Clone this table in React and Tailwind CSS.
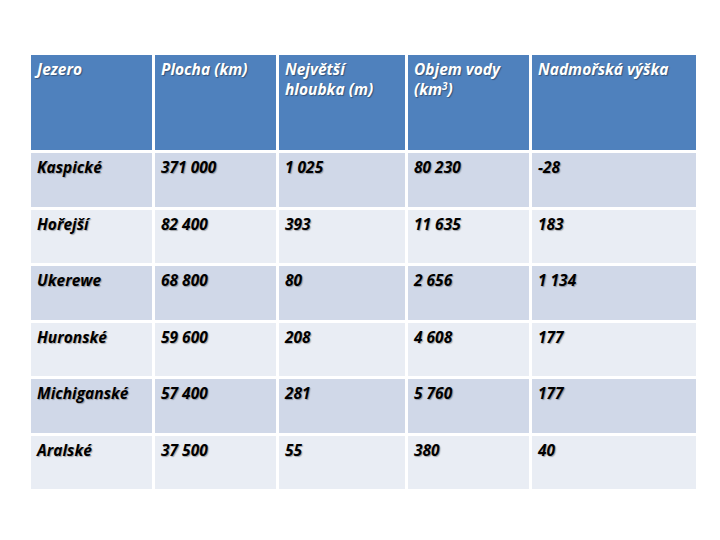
import React from "react";

const rows = [
    ["Kaspické", "371 000", "1 025", "80 230", "-28"],
    ["Hořejší", "82 400", "393", "11 635", "183"],
    ["Ukerewe", "68 800", "80", "2 656", "1 134"],
    ["Huronské", "59 600", "208", "4 608", "177"],
    ["Michiganské", "57 400", "281", "5 760", "177"],
    ["Aralské", "37 500", "55", "380", "40"],
];

function App() {
    return (
        <div className="w-[720px] h-[540px] bg-white pt-[55px] pl-[31px] font-['Open_Sans',sans-serif] font-bold italic text-[15.5px] leading-[20px]">
            <div className="grid grid-cols-[121px_121px_126px_121px_164px] grid-rows-[95px_repeat(6,53.5px)] gap-x-[3px] gap-y-[3px]">
                <div className="bg-[#4f81bd] text-white px-[6px] py-[4px] [text-shadow:1px_1px_1px_rgba(0,0,0,0.35)]">Jezero</div>
                <div className="bg-[#4f81bd] text-white px-[6px] py-[4px] [text-shadow:1px_1px_1px_rgba(0,0,0,0.35)]">Plocha (km)</div>
                <div className="bg-[#4f81bd] text-white px-[6px] py-[4px] [text-shadow:1px_1px_1px_rgba(0,0,0,0.35)]">Největší<br />hloubka (m)</div>
                <div className="bg-[#4f81bd] text-white px-[6px] py-[4px] [text-shadow:1px_1px_1px_rgba(0,0,0,0.35)]">Objem vody<br />(km<sup className="text-[10px]">3</sup>)</div>
                <div className="bg-[#4f81bd] text-white px-[6px] py-[4px] [text-shadow:1px_1px_1px_rgba(0,0,0,0.35)]">Nadmořská výška</div>
                {rows.map((r, i) =>
                    r.map((c, j) => (
                        <div
                            key={i + "-" + j}
                            className={(i % 2 === 0 ? "bg-[#d0d8e8]" : "bg-[#e9edf4]") + " text-black px-[6px] py-[4px] [text-shadow:1px_1px_1px_rgba(0,0,0,0.3)]"}
                        >
                            {c}
                        </div>
                    ))
                )}
            </div>
        </div>
    );
}

export default App;
